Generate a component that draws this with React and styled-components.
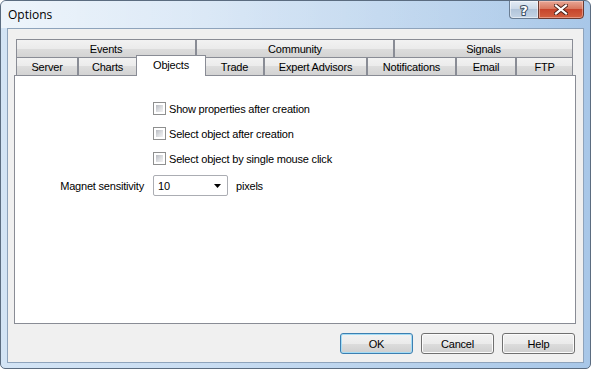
import React from 'react'
import styled, { createGlobalStyle } from 'styled-components';

const GlobalStyle = createGlobalStyle`
    html, body {
        margin: 0;
        padding: 0;
        background: #ffffff;
    }
    body {
        width: 591px;
        height: 369px;
        overflow: hidden;
        font-family: "Liberation Sans", Arial, sans-serif;
        font-size: 11px;
        letter-spacing: -0.2px;
        color: #000;
    }
`

const Window = styled.div`
    width: 591px;
    height: 369px;
    box-sizing: border-box;
    border: 1px solid #5b6c80;
    border-radius: 6px 6px 5px 5px;
    background: linear-gradient(to right, #d3e4f5 0%, #c9ddf2 35%, #b7d1ec 70%, #a8c7e8 100%);
    display: flex;
    flex-direction: column;
    overflow: hidden;
`

const TitleBar = styled.div`
    height: 27px;
    display: flex;
    align-items: flex-start;
    padding-left: 7px;
    background: linear-gradient(to right, rgba(255,255,255,0.6) 0%, rgba(255,255,255,0.25) 45%, rgba(255,255,255,0) 100%);
`

const Title = styled.div`
    align-self: center;
    font-family: "Open Sans", "Noto Sans", sans-serif;
    font-size: 12px;
    letter-spacing: 0;
    color: #000;
`

const CaptionButtons = styled.div`
    margin-left: auto;
    margin-right: 6px;
    margin-top: -1px;
    display: flex;
`

const HelpButton = styled.div`
    width: 29px;
    height: 19px;
    box-sizing: border-box;
    border: 1px solid #6a7d93;
    border-right: none;
    border-radius: 0 0 0 4px;
    background: linear-gradient(#e4ecf5 0%, #ccd9e8 45%, #b2c5da 50%, #c4d4e6 100%);
    box-shadow: inset 0 0 0 1px rgba(255,255,255,0.5);
    display: flex;
    align-items: center;
    justify-content: center;
`

const CloseButton = styled.div`
    width: 46px;
    height: 19px;
    box-sizing: border-box;
    border: 1px solid #6b3a31;
    border-radius: 0 0 4px 0;
    background: linear-gradient(#e8a796 0%, #d8785f 45%, #c7452c 50%, #d2603f 100%);
    box-shadow: inset 0 0 0 1px rgba(255,220,210,0.45);
    display: flex;
    align-items: center;
    justify-content: center;
`

const Client = styled.div`
    flex: 1;
    margin: 0 6px 5px 6px;
    border: 1px solid #8ea3bb;
    background: #f0f0f0;
    padding: 10px 7px 0 6px;
    display: flex;
    flex-direction: column;
`

const TabControl = styled.div`
    width: 562px;
    display: flex;
    flex-direction: column;
`

const TabStrip = styled.div`
    padding: 0 2px;
    display: flex;
    flex-direction: column;
`

const TabRow = styled.div`
    height: 18px;
    display: flex;
`

const Tab = styled.div`
    flex: 0 0 ${p => p.$w}px;
    box-sizing: border-box;
    border: 1px solid #898c95;
    border-bottom: none;
    background: linear-gradient(#f2f2f2 0%, #ebebeb 50%, #dddddd 50%, #d3d3d3 100%);
    display: flex;
    align-items: center;
    justify-content: center;
    white-space: nowrap;
    padding-top: 1px;
`

const ActiveTab = styled(Tab)`
    flex-basis: ${p => p.$w + 2}px;
    margin: -2px -1px -1px -1px;
    position: relative;
    z-index: 1;
    background: #ffffff;
    padding-top: 0;
    padding-bottom: 2px;
`

const Panel = styled.div`
    height: 249px;
    box-sizing: border-box;
    border: 1px solid #898c95;
    background: #ffffff;
    padding-top: 26px;
`

const Options = styled.div`
    margin-left: 138px;
    display: flex;
    flex-direction: column;
    gap: 12px;
`

const CheckRow = styled.label`
    height: 13px;
    display: flex;
    align-items: center;
    gap: 3px;
`

const CheckBox = styled.span`
    width: 13px;
    height: 13px;
    box-sizing: border-box;
    border: 1px solid #8e8f8f;
    padding: 2px;
    background: linear-gradient(135deg, #b9bcc2 0%, #dcdee1 55%, #f2f2f3 100%) content-box, #ffffff;
`

const MagnetRow = styled.div`
    margin-top: 10px;
    display: flex;
    align-items: center;
`

const FieldLabel = styled.div`
    width: 138px;
    box-sizing: border-box;
    padding-right: 9px;
    text-align: right;
`

const Combo = styled.div`
    width: 75px;
    height: 21px;
    box-sizing: border-box;
    border: 1px solid #abadb3;
    border-radius: 2px;
    background: #ffffff;
    display: flex;
    align-items: center;
    padding: 0 6px 0 4px;
    justify-content: space-between;
`

const Unit = styled.div`
    margin-left: 8px;
`

const ButtonRow = styled.div`
    margin-top: 9px;
    padding-right: 1px;
    display: flex;
    justify-content: flex-end;
    gap: 8px;
`

const Button = styled.div`
    width: 73px;
    height: 21px;
    box-sizing: border-box;
    border: 1px solid ${p => p.$default ? '#3c7fb1' : '#707070'};
    border-radius: 3px;
    background: linear-gradient(#f2f2f2 0%, #ebebeb 50%, #dddddd 50%, #cfcfcf 100%);
    box-shadow: inset 0 0 0 1px ${p => p.$default ? '#a4dcf5' : '#fbfbfb'};
    display: flex;
    align-items: center;
    justify-content: center;
`

const topTabs = [
    { label: 'Events', w: 180 },
    { label: 'Community', w: 198 },
    { label: 'Signals', w: 179 },
]

const bottomTabs = [
    { label: 'Server', w: 62 },
    { label: 'Charts', w: 59 },
    { label: 'Objects', w: 68, active: true },
    { label: 'Trade', w: 59 },
    { label: 'Expert Advisors', w: 103 },
    { label: 'Notifications', w: 89 },
    { label: 'Email', w: 60 },
    { label: 'FTP', w: 57 },
]

const checks = [
    'Show properties after creation',
    'Select object after creation',
    'Select object by single mouse click',
]

export default function App() {
    return (
        <>
            <GlobalStyle />
            <Window>
                <TitleBar>
                    <Title>Options</Title>
                    <CaptionButtons>
                        <HelpButton>
                            <svg width="12" height="14" viewBox="0 0 12 14">
                                <text x="6" y="12" textAnchor="middle" fontFamily="DejaVu Sans, sans-serif"
                                    fontWeight="bold" fontSize="13" fill="#ffffff" stroke="#3a4c61"
                                    strokeWidth="2" paintOrder="stroke" strokeLinejoin="round">?</text>
                            </svg>
                        </HelpButton>
                        <CloseButton>
                            <svg width="14" height="11" viewBox="0 0 14 11">
                                <path d="M2 1.5 L12 9.5 M12 1.5 L2 9.5" stroke="#4a2018" strokeWidth="4" strokeLinecap="square" />
                                <path d="M2 1.5 L12 9.5 M12 1.5 L2 9.5" stroke="#ffffff" strokeWidth="2.2" strokeLinecap="square" />
                            </svg>
                        </CloseButton>
                    </CaptionButtons>
                </TitleBar>
                <Client>
                    <TabControl>
                        <TabStrip>
                            <TabRow>
                                {topTabs.map(t => <Tab key={t.label} $w={t.w}>{t.label}</Tab>)}
                            </TabRow>
                            <TabRow>
                                {bottomTabs.map(t => t.active
                                    ? <ActiveTab key={t.label} $w={t.w}>{t.label}</ActiveTab>
                                    : <Tab key={t.label} $w={t.w}>{t.label}</Tab>
                                )}
                            </TabRow>
                        </TabStrip>
                        <Panel>
                            <Options>
                                {checks.map(c => (
                                    <CheckRow key={c}>
                                        <CheckBox />
                                        {c}
                                    </CheckRow>
                                ))}
                            </Options>
                            <MagnetRow>
                                <FieldLabel>Magnet sensitivity</FieldLabel>
                                <Combo>
                                    <span>10</span>
                                    <svg width="7" height="4" viewBox="0 0 7 4">
                                        <path d="M0 0 H7 L3.5 4 Z" fill="#000" />
                                    </svg>
                                </Combo>
                                <Unit>pixels</Unit>
                            </MagnetRow>
                        </Panel>
                        <ButtonRow>
                            <Button $default>OK</Button>
                            <Button>Cancel</Button>
                            <Button>Help</Button>
                        </ButtonRow>
                    </TabControl>
                </Client>
            </Window>
        </>
    )
}
